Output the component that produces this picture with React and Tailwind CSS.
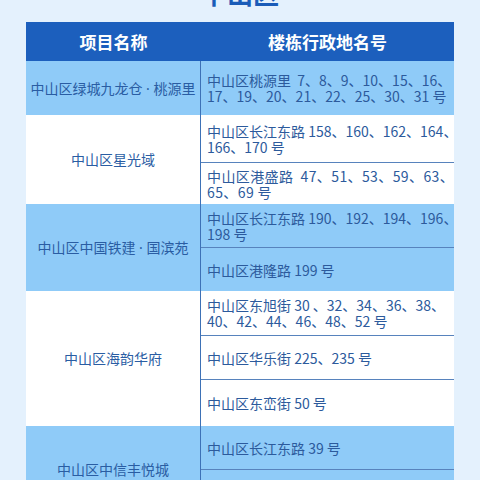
const FONT = { fontFamily: '"Noto Sans CJK SC", "Noto Sans", sans-serif' };

const Dot = () => <span style={{ fontFamily: '"Noto Sans", sans-serif' }}>{'\u00a0·\u00a0'}</span>;

const rows = [
  {
    name: (
      <>
        中山区绿城九龙仓
        <Dot />
        桃源里
      </>
    ),
    tint: true,
    cells: [{ h: 'h-[54px]', lines: ['中山区桃源里  7、8、9、10、15、16、', '17、19、20、21、22、25、30、31 号'] }],
  },
  {
    name: '中山区星光域',
    tint: false,
    cells: [
      { h: 'h-[47px]', lines: ['中山区长江东路 158、160、162、164、', '166、170 号'] },
      { h: 'h-[42px]', lines: ['中山区港盛路  47、51、53、59、63、', '65、69 号'], wide: true },
    ],
  },
  {
    name: (
      <>
        中山区中国铁建
        <Dot />
        国滨苑
      </>
    ),
    tint: true,
    cells: [
      { h: 'h-[43px]', lines: ['中山区长江东路 190、192、194、196、', '198 号'] },
      { h: 'h-[44px]', lines: ['中山区港隆路 199 号'] },
    ],
  },
  {
    name: '中山区海韵华府',
    tint: false,
    cells: [
      { h: 'h-[44px]', lines: ['中山区东旭街 30 、32、34、36、38、', '40、42、44、46、48、52 号'] },
      { h: 'h-[44px]', lines: ['中山区华乐街 225、235 号'] },
      { h: 'h-[47px]', lines: ['中山区东峦街 50 号'] },
    ],
  },
  {
    name: '中山区中信丰悦城',
    tint: true,
    cells: [
      { h: 'h-[43px]', lines: ['中山区长江东路 39 号'] },
      { h: 'h-[43px]', lines: ['中山区长江东路 41 号'] },
    ],
  },
];

export default function App() {
  return (
    <div className="w-[480px] h-[480px] overflow-hidden bg-[#e4f1fd]" style={FONT}>
      <div className="h-[22px] flex justify-center items-end">
        <span className="text-[26px] leading-none font-bold text-[#1a5cb8] mb-[16px]">中山区</span>
      </div>

      <div className="mx-[26px] w-[428px]">
        <div className="grid grid-cols-[175px_253px] h-[39px] bg-[#1c5fbd] text-white font-bold text-[17px]">
          <div className="flex items-center justify-center">项目名称</div>
          <div className="flex items-center justify-center">楼栋行政地名号</div>
        </div>

        {rows.map((row, r) => (
          <div key={r} className={`grid grid-cols-[175px_253px] ${row.tint ? 'bg-[#8fcbf8]' : 'bg-white'}`}>
            <div className="flex items-center justify-center whitespace-nowrap border-r border-[#3d71b6] text-[14px] text-[#2a5da3]">
              <span>{row.name}</span>
            </div>
            <div className="flex flex-col">
              {row.cells.map((cell, i) => (
                <div
                  key={i}
                  className={`${cell.h} flex flex-col justify-center pl-[6px] text-[14px] leading-[16px] text-[#2c5a9c] ${
                    i > 0 ? 'border-t border-[#5783bd]' : ''
                  } ${cell.wide ? 'tracking-[0.4px]' : ''}`}
                >
                  {cell.lines.map((line) => (
                    <div key={line} className="whitespace-pre">
                      {line}
                    </div>
                  ))}
                </div>
              ))}
            </div>
          </div>
        ))}
      </div>
    </div>
  );
}
